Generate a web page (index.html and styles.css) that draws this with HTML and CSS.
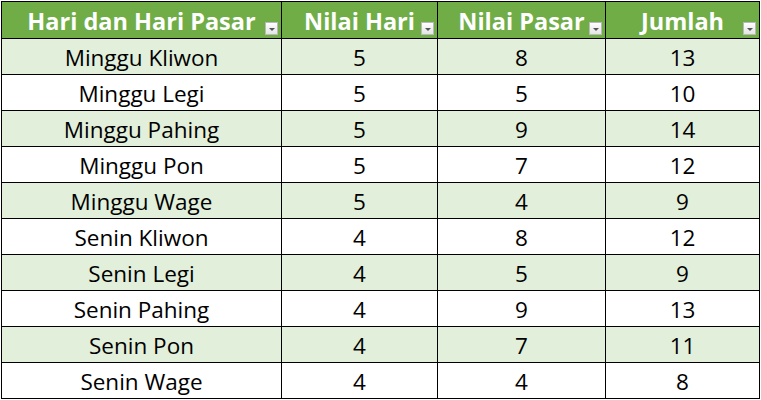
FILE: index.html
```html
<!DOCTYPE html>
<html>
<head>
<meta charset="utf-8">
<link rel="stylesheet" href="styles.css">
</head>
<body>
<table class="grid">
  <colgroup>
    <col class="c1"><col class="c2"><col class="c3"><col class="c4">
  </colgroup>
  <thead>
    <tr>
      <th>Hari dan Hari Pasar<span class="filter"></span></th>
      <th>Nilai Hari<span class="filter"></span></th>
      <th>Nilai Pasar<span class="filter"></span></th>
      <th>Jumlah<span class="filter"></span></th>
    </tr>
  </thead>
  <tbody>
    <tr><td>Minggu Kliwon</td><td>5</td><td>8</td><td>13</td></tr>
    <tr><td>Minggu Legi</td><td>5</td><td>5</td><td>10</td></tr>
    <tr><td>Minggu Pahing</td><td>5</td><td>9</td><td>14</td></tr>
    <tr><td>Minggu Pon</td><td>5</td><td>7</td><td>12</td></tr>
    <tr><td>Minggu Wage</td><td>5</td><td>4</td><td>9</td></tr>
    <tr><td>Senin Kliwon</td><td>4</td><td>8</td><td>12</td></tr>
    <tr><td>Senin Legi</td><td>4</td><td>5</td><td>9</td></tr>
    <tr><td>Senin Pahing</td><td>4</td><td>9</td><td>13</td></tr>
    <tr><td>Senin Pon</td><td>4</td><td>7</td><td>11</td></tr>
    <tr><td>Senin Wage</td><td>4</td><td>4</td><td>8</td></tr>
  </tbody>
</table>
</body>
</html>
```
FILE: styles.css
```css
html, body {
  margin: 0;
  padding: 0;
  background: #ffffff;
}
body {
  padding: 1px 0 0 1px;
  font-family: "Open Sans", Lato, sans-serif;
}
.grid {
  border-collapse: collapse;
  table-layout: fixed;
  width: 758px;
}
.c1 { width: 280px; }
.c2 { width: 156px; }
.c3 { width: 168px; }
.c4 { width: 154px; }
.grid th, .grid td {
  border: 1px solid #000;
  padding: 0;
  text-align: center;
  color: #000;
  overflow: hidden;
  white-space: nowrap;
}
.grid th {
  position: relative;
  height: 34px;
  padding-top: 2px;
  background: #70ad47;
  color: #ffffff;
  font-weight: bold;
  font-size: 23.5px;
  line-height: 34px;
}
.grid td {
  height: 33px;
  padding-top: 2px;
  font-size: 22.5px;
  line-height: 33px;
}
.grid tbody tr:nth-child(odd) td {
  background: #e2efda;
}
.filter {
  position: absolute;
  right: 3px;
  bottom: 3px;
  width: 13px;
  height: 13px;
  box-sizing: border-box;
  border: 1px solid #b9b9b9;
  background: linear-gradient(#ffffff, #e4e4e4);
}
.filter::after {
  content: "";
  position: absolute;
  left: 3px;
  top: 5px;
  border-left: 3px solid transparent;
  border-right: 3px solid transparent;
  border-top: 3px solid #555;
}
```
